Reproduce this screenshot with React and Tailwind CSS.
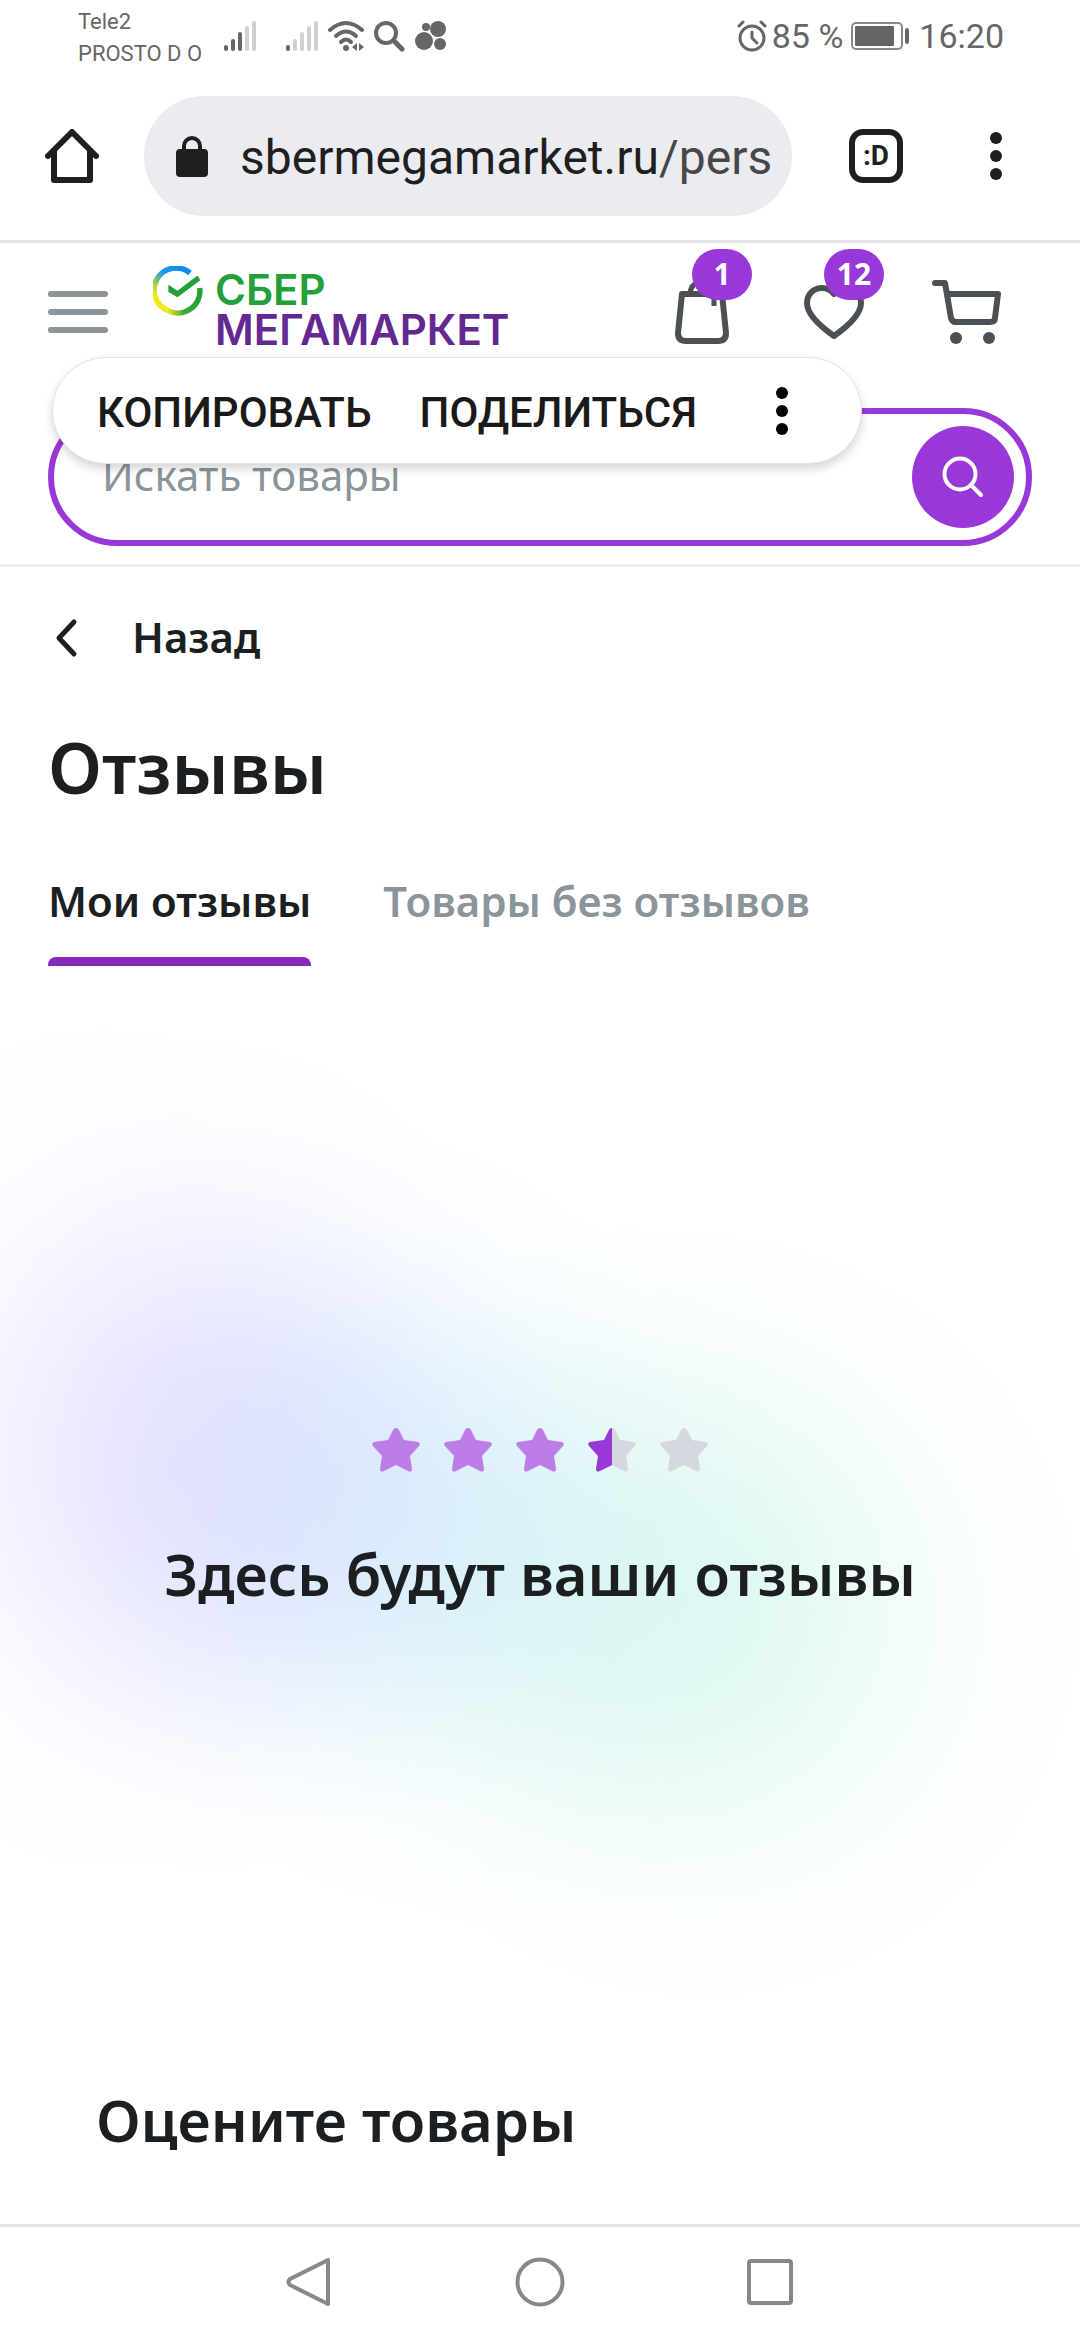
import { useState } from 'react'

const Signal = ({ level }) => (
  <svg viewBox="0 0 34 32" className="h-8 w-[34px]">
    {[6, 12, 19, 25, 30].map((height, i) => (
      <rect key={i} x={1 + i * 7} y={31 - height} width="4" height={height} rx="2" fill={i < level ? '#666' : '#d0d0d0'} />
    ))}
  </svg>
)

const Dots = ({ className }) => (
  <svg viewBox="0 0 12 48" className={className} fill="currentColor">
    <circle cx="6" cy="6" r="6" />
    <circle cx="6" cy="24" r="6" />
    <circle cx="6" cy="42" r="6" />
  </svg>
)

const StatusBar = () => (
  <div className="flex h-[72px] items-center justify-between pr-[76px] pl-[78px] text-[#666]">
    <div className="flex items-center">
      <div className="w-[145px] pt-1 text-[22px] leading-8 whitespace-nowrap">
        <p>Tele2</p>
        <p>PROSTO D O</p>
      </div>
      <Signal level={3} />
      <div className="w-7" />
      <Signal level={1} />
      <svg viewBox="0 0 40 32" className="ml-2 h-8 w-10" fill="none" stroke="#666" strokeWidth="4" strokeLinecap="round">
        <path d="M3 10Q19 -4 35 10" />
        <path d="M9 16Q19 7 29 16" />
        <path d="M14 22Q19 17 24 22" />
        <circle cx="19" cy="28" r="3" fill="#666" stroke="none" />
        <path d="M30 23v8l-5-4zM32 23v8l5-4z" fill="#666" stroke="none" />
      </svg>
      <svg viewBox="0 0 32 32" className="ml-[6px] h-8 w-8" fill="none" stroke="#666" strokeWidth="4" strokeLinecap="round">
        <circle cx="13" cy="13" r="10" />
        <path d="M21 21L29 29" strokeWidth="5" />
      </svg>
      <svg viewBox="0 0 32 32" className="ml-[10px] h-8 w-8" fill="#666">
        <circle cx="11" cy="7" r="4" />
        <circle cx="23" cy="9" r="8" />
        <circle cx="9" cy="21" r="9" />
        <circle cx="25" cy="24" r="6" />
      </svg>
    </div>
    <div className="flex items-center text-[34px] leading-10">
      <svg viewBox="0 0 32 32" className="mr-1 h-8 w-8" fill="none" stroke="#666" strokeWidth="3" strokeLinecap="round">
        <circle cx="16" cy="18" r="12" />
        <path d="M16 12v6l5 5M3 6l4-4M29 6l-4-4" />
      </svg>
      <span className="whitespace-nowrap">85 %</span>
      <svg viewBox="0 0 60 28" className="mx-2 h-7 w-[60px]">
        <rect x="1" y="1" width="50" height="26" rx="4" fill="none" stroke="#888" strokeWidth="2" />
        <rect x="4" y="4" width="39" height="20" rx="1" fill="#666" />
        <rect x="54" y="6" width="4" height="16" rx="2" fill="#666" />
      </svg>
      <span>16:20</span>
    </div>
  </div>
)

const BrowserBar = () => (
  <div className="flex h-[171px] items-center border-b-3 border-[#e2e2e2] pr-[78px] pl-[45px] text-[#1f1f1f]">
    <button aria-label="Главная">
      <svg viewBox="0 0 54 54" className="h-[54px] w-[54px]" fill="none" stroke="currentColor" strokeWidth="6" strokeLinecap="round" strokeLinejoin="round">
        <path d="M3 27L27 3L51 27" />
        <path d="M9 22V51H45V22" />
      </svg>
    </button>
    <div className="mr-[57px] ml-[45px] flex h-[120px] flex-1 items-center overflow-hidden rounded-full bg-[#ebecf1] pr-5 pl-8">
      <svg viewBox="0 0 32 42" className="mr-8 h-[42px] w-8 shrink-0">
        <path d="M8 16V11a8 8 0 0 1 16 0V16" fill="none" stroke="#1f1f1f" strokeWidth="4" />
        <rect y="14" width="32" height="28" rx="4" fill="#1f1f1f" />
      </svg>
      <p className="pt-1 text-[48px] whitespace-nowrap">
        sbermegamarket.ru<span className="text-[#474747]">/pers</span>
      </p>
    </div>
    <button aria-label="Вкладки" className="flex h-[54px] w-[54px] items-center justify-center rounded-[14px] border-6 border-[#1f1f1f] text-[28px] leading-none font-bold">
      :D
    </button>
    <button aria-label="Меню браузера" className="ml-[87px]">
      <Dots className="h-12 w-3" />
    </button>
  </div>
)

const Logo = () => (
  <a href="#" className="ml-[45px] flex h-[92px] items-start font-[Inter,sans-serif] font-semibold">
    <svg viewBox="0 0 50 50" className="mr-3 h-[50px] w-[50px]">
      <defs>
        <linearGradient id="ringLeft" x1="0.8" y1="0" x2="0.3" y2="1">
          <stop offset="0.1" stopColor="#0a8cf0" />
          <stop offset="0.3" stopColor="#12a0e8" />
          <stop offset="0.55" stopColor="#8cc65c" />
          <stop offset="0.8" stopColor="#f0e81c" />
        </linearGradient>
        <linearGradient id="ringRight" x1="0" y1="0" x2="1" y2="0">
          <stop offset="0" stopColor="#f0e81c" />
          <stop offset="0.5" stopColor="#43a838" />
          <stop offset="1" stopColor="#21a038" />
        </linearGradient>
      </defs>
      <path d="M37 7A22 22 0 1 0 15 44.500" fill="none" stroke="url(#ringLeft)" strokeWidth="5.500" />
      <path d="M14.500 44.300A22 22 0 0 0 46.700 22" fill="none" stroke="url(#ringRight)" strokeWidth="5.500" />
      <path d="M15.400 18.700L24.500 24.700L44.500 9.500L47.300 14.300L24.500 31.300L15.400 26Z" fill="#21a038" />
    </svg>
    <span className="flex flex-col pt-1 text-[42px] leading-10">
      <span className="text-[#249f3a]">СБЕР</span>
      <span className="text-[#632991]">МЕГАМАРКЕТ</span>
    </span>
  </a>
)

const IconLink = ({ label, count, children }) => (
  <a href="#" aria-label={label} className="relative flex h-[102px] w-[72px] items-center justify-center text-[#4b5055]">
    {children}
    {count && (
      <span className="absolute -top-3 left-[26px] flex h-[51px] w-[60px] items-center justify-center rounded-full bg-[#9938d9] pb-[2px] text-[30px] font-bold text-white">
        {count}
      </span>
    )}
  </a>
)

const SelectionMenu = () => (
  <div className="absolute -top-[51px] left-1 flex h-[107px] w-[810px] max-w-full items-center rounded-full border border-[#e2e2e2] bg-white pl-11 font-[Roboto,sans-serif] text-[42px] font-medium text-[#1a1a1a] shadow-[0_5px_10px_rgba(0,0,0,0.16)]">
    <button className="pt-1">КОПИРОВАТЬ</button>
    <button className="ml-12 pt-1">ПОДЕЛИТЬСЯ</button>
    <button aria-label="Ещё" className="mr-[73px] ml-auto text-black">
      <Dots className="h-12 w-3" />
    </button>
  </div>
)

const Header = () => (
  <header className="border-b-3 border-[#ebefef] px-12 pt-[18px] pb-[18px]">
    <div className="flex h-[102px] items-center">
      <button aria-label="Каталог" className="flex w-[60px] flex-col gap-3">
        <span className="h-[6px] rounded-full bg-[#8b949b]" />
        <span className="h-[6px] rounded-full bg-[#8b949b]" />
        <span className="h-[6px] rounded-full bg-[#8b949b]" />
      </button>
      <Logo />
      <nav className="mr-[30px] ml-auto flex gap-[60px]">
        <IconLink label="Заказы" count="1">
          <svg viewBox="0 0 54 64" className="h-16 w-[54px]" fill="none" stroke="currentColor" strokeWidth="6" strokeLinejoin="round">
            <path d="M7 14H47L51 53Q51 61 43 61H11Q3 61 3 53Z" />
            <path d="M15 14Q16 2 27 2Q39 2 39 13V26" strokeWidth="5" />
          </svg>
        </IconLink>
        <IconLink label="Избранное" count="12">
          <svg viewBox="0 0 60 54" className="h-[54px] w-[60px]" fill="none" stroke="currentColor" strokeWidth="6" strokeLinejoin="round">
            <path d="M30 51C13 39 3 28 3 18C3 9 10 3 18 3C23 3 27 5 30 9C33 5 37 3 42 3C50 3 57 9 57 18C57 28 47 39 30 51Z" />
          </svg>
        </IconLink>
        <IconLink label="Корзина">
          <svg viewBox="0 0 69 64" className="h-16 w-[69px]" fill="none" stroke="currentColor" strokeWidth="6" strokeLinecap="round" strokeLinejoin="round">
            <path d="M3 3H13L19 38Q20 42 24 42H58Q63 42 63 38L66 14H16" />
            <circle cx="24" cy="58" r="6" fill="currentColor" stroke="none" />
            <circle cx="57" cy="58" r="6" fill="currentColor" stroke="none" />
          </svg>
        </IconLink>
      </nav>
    </div>
    <div className="relative mt-[45px]">
      <form className="flex h-[138px] items-center rounded-full border-6 border-[#9938d9] pr-3 pl-12" onSubmit={(e) => e.preventDefault()}>
        <input aria-label="Поиск" placeholder="Искать товары" className="min-w-0 flex-1 pb-[6px] text-[42px] outline-none placeholder:text-[#8b949b]" />
        <button aria-label="Найти" className="flex h-[102px] w-[102px] items-center justify-center rounded-full bg-[#9938d9]">
          <svg viewBox="0 0 42 42" className="h-[42px] w-[42px]" fill="none" stroke="white" strokeWidth="4" strokeLinecap="round">
            <circle cx="18" cy="18" r="15.500" />
            <path d="M29 29L39 39" />
          </svg>
        </button>
      </form>
      <SelectionMenu />
    </div>
  </header>
)

const STAR = 'M24 2Q26 2 27 4L32 14L46 16Q49 17 47 20L38 30L40 43Q40 47 36 45L24 39L12 45Q8 47 8 43L10 30L1 20Q-1 17 2 16L16 14L21 4Q22 2 24 2Z'

const Star = ({ fill, half }) => (
  <svg viewBox="0 0 48 48" className="h-12 w-12">
    <path d={STAR} fill={fill} />
    {half && <path d={STAR} fill={half} style={{ clipPath: 'inset(0 50% 0 0)' }} />}
  </svg>
)

const tabs = ['Мои отзывы', 'Товары без отзывов']

const Reviews = () => {
  const [active, setActive] = useState(0)

  return (
    <main className="flex-1 pt-[38px] font-semibold text-[#1b1f22]">
      <div className="px-12">
        <a href="#" className="flex items-center text-[42px] leading-[64px]">
          <svg viewBox="0 0 36 42" className="mr-12 h-[42px] w-9" fill="none" stroke="currentColor" strokeWidth="5" strokeLinecap="round" strokeLinejoin="round">
            <path d="M26 6L11 22L26 38" />
          </svg>
          Назад
        </a>
        <h1 className="mt-[58px] text-[70px] leading-[80px]">Отзывы</h1>
        <div role="tablist" className="mt-[66px] flex gap-[72px] text-[42px] leading-[56px]">
          {tabs.map((tab, i) => (
            <button
              key={tab}
              role="tab"
              aria-selected={active === i}
              onClick={() => setActive(i)}
              className={active === i ? 'flex flex-col gap-7 whitespace-nowrap' : 'flex flex-col gap-7 whitespace-nowrap text-[#8b949b]'}
            >
              {tab}
              <span className={active === i ? 'h-[9px] w-full rounded-t-lg bg-[#8729bd]' : 'h-[9px] w-full'} />
            </button>
          ))}
        </div>
      </div>
      <section className="mt-[60px] flex h-[980px] flex-col items-center bg-[radial-gradient(340px_420px_at_210px_430px,#cfc8ff59_0%,#cfc8ff49_25%,#cfc8ff29_50%,#cfc8ff0c_75%,#cfc8ff00_100%),radial-gradient(300px_430px_at_100px_420px,#ecd8ff40_0%,#ecd8ff34_25%,#ecd8ff1d_50%,#ecd8ff09_75%,#ecd8ff00_100%),radial-gradient(380px_360px_at_320px_450px,#c4e0ff6b_0%,#c4e0ff58_25%,#c4e0ff31_50%,#c4e0ff0f_75%,#c4e0ff00_100%),radial-gradient(440px_360px_at_500px_540px,#c8eff573_0%,#c8eff55e_25%,#c8eff535_50%,#c8eff510_75%,#c8eff500_100%),radial-gradient(400px_400px_at_700px_590px,#c8f5e480_0%,#c8f5e469_25%,#c8f5e43b_50%,#c8f5e412_75%,#c8f5e400_100%)] pt-[400px]">
        <div className="flex gap-6" role="img" aria-label="3,5 из 5">
          <Star fill="#bd7de7" />
          <Star fill="#bd7de7" />
          <Star fill="#bd7de7" />
          <Star fill="#d5d8df" half="#9938d9" />
          <Star fill="#d5d8df" />
        </div>
        <h2 className="mt-16 text-[58px] leading-[72px] whitespace-nowrap">Здесь будут ваши отзывы</h2>
      </section>
      <h2 className="mt-[78px] px-24 text-[58px] leading-[72px]">Оцените товары</h2>
    </main>
  )
}

const SystemNav = () => (
  <div className="flex h-[116px] items-center justify-center gap-[180px] border-t-3 border-[#e2e2e2] pb-1">
    <button aria-label="Назад">
      <svg viewBox="0 0 50 50" className="h-[50px] w-[50px]" fill="none" stroke="#888" strokeWidth="4" strokeLinejoin="round">
        <path d="M43 3V47L5 28Q2 25 5 22Z" />
      </svg>
    </button>
    <button aria-label="Домой">
      <svg viewBox="0 0 50 50" className="h-[50px] w-[50px]" fill="none" stroke="#888" strokeWidth="4">
        <circle cx="25" cy="25" r="22.500" />
      </svg>
    </button>
    <button aria-label="Недавние">
      <svg viewBox="0 0 50 50" className="h-[50px] w-[50px]" fill="none" stroke="#888" strokeWidth="4">
        <rect x="4" y="4" width="42" height="42" rx="2" />
      </svg>
    </button>
  </div>
)

const App = () => (
  <div className="flex min-h-screen flex-col overflow-x-hidden bg-white font-['Noto_Sans',sans-serif]">
    <div className="font-[Roboto,sans-serif]">
      <StatusBar />
      <BrowserBar />
    </div>
    <Header />
    <Reviews />
    <SystemNav />
  </div>
)

export default App
